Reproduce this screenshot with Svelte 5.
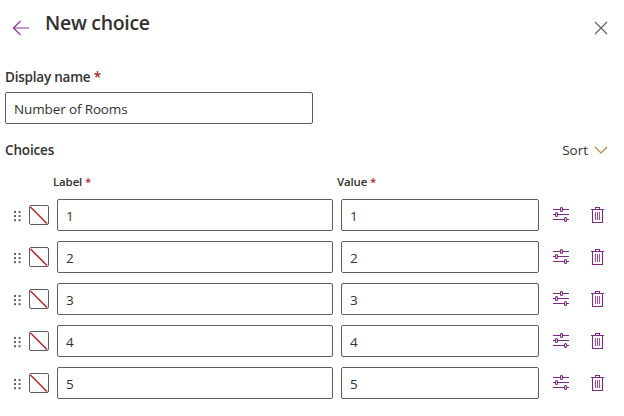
<script>
  let displayName = $state('Number of Rooms');
  let choices = $state([1, 2, 3, 4, 5].map((n) => ({ label: String(n), value: String(n) })));
  const dots = [0, 1, 2].flatMap((r) => [0, 1].map((c) => ({ x: c * 4.6, y: r * 4.1 })));
</script>

<main class="panel">
  <header class="header">
    <button class="back" aria-label="Back">
      <svg width="18" height="16" viewBox="0 0 18 16" fill="none" stroke="#8a3a91" stroke-width="1.2">
        <path d="M1.5 8H17M8.5 1L1.5 8l7 7" />
      </svg>
    </button>
    <h1>New choice</h1>
    <button class="close" aria-label="Close">
      <svg width="14" height="14" viewBox="0 0 14 14" fill="none" stroke="#5c5a60" stroke-width="1.1">
        <path d="M1 1l12 12M13 1L1 13" />
      </svg>
    </button>
  </header>

  <label class="field-label" for="display-name">Display name <span class="req">*</span></label>
  <input id="display-name" class="box name" bind:value={displayName} />

  <div class="section">
    <h2>Choices</h2>
    <button class="sort">
      <span>Sort</span>
      <svg width="14" height="8" viewBox="0 0 14 8" fill="none" stroke="#b37b39" stroke-width="1.1">
        <path d="M1 1l6 6 6-6" />
      </svg>
    </button>
  </div>

  <div class="columns">
    <span class="col-label">Label <span class="req">*</span></span>
    <span class="col-value">Value <span class="req">*</span></span>
  </div>

  <div class="rows">
    {#each choices as choice}
      <div class="row">
        <svg class="handle" width="7" height="11" viewBox="0 0 7 11" fill="#656066">
          {#each dots as d}
            <rect x={d.x} y={d.y} width="2" height="2" />
          {/each}
        </svg>
        <button class="swatch" aria-label="Color">
          <svg width="18" height="18" viewBox="0 0 18 18" stroke="#b5202a" stroke-width="1.5">
            <path d="M.5 1L17 17.5" />
          </svg>
        </button>
        <input class="box label" aria-label="Label" bind:value={choice.label} />
        <input class="box value" aria-label="Value" bind:value={choice.value} />
        <button class="settings" aria-label="Settings">
          <svg width="16" height="16" viewBox="0 0 16 16" fill="none" stroke="#7c2a84" stroke-width="1.1">
            <path d="M0 2.500h7.500M9.500 2.500H16M0 7.500h2.500M4.500 7.500H16M0 12.500h11.500M13.500 12.500H16" />
            <rect x="7.500" y="0.500" width="2" height="4" rx="1" />
            <rect x="2.500" y="5.500" width="2" height="4" rx="1" />
            <rect x="11.500" y="10.500" width="2" height="4" rx="1" />
          </svg>
        </button>
        <button class="delete" aria-label="Delete">
          <svg width="13" height="16" viewBox="0 0 13 16" fill="none" stroke="#7c2a84" stroke-width="1.1">
            <path d="M0 2.500h13M4.500 2.500v-2h4v2M1.500 2.500v13h10v-13" />
            <path d="M4.500 5v8M6.500 5v8M8.500 5v8" stroke-opacity=".8" />
          </svg>
        </button>
      </div>
    {/each}
  </div>
</main>

<style>
  :global(body) {
    background: #fff;
  }
  .panel {
    box-sizing: border-box;
    width: 624px;
    height: 416px;
    overflow: hidden;
    background: #fff;
    color: #323130;
    font-family: 'Open Sans', 'Noto Sans', sans-serif;
    font-size: 14px;
  }
  button {
    display: flex;
    padding: 0;
    border: 0;
    background: none;
    color: inherit;
    font: inherit;
  }
  svg {
    display: block;
  }
  h1,
  h2 {
    margin: 0;
    font-weight: 600;
  }
  .header {
    display: flex;
    align-items: flex-start;
    height: 67px;
    padding: 0 16px 0 12px;
    box-sizing: border-box;
  }
  .back {
    margin-top: 20px;
  }
  h1 {
    margin: 9px auto 0 15px;
    font-size: 19.500px;
    line-height: 28px;
    letter-spacing: -0.300px;
  }
  .close {
    margin-top: 21px;
  }
  .field-label {
    display: block;
    height: 25px;
    padding-left: 5px;
    font-size: 13.500px;
    font-weight: 600;
    line-height: 20px;
    letter-spacing: -0.220px;
  }
  .req {
    color: #a4262c;
  }
  .box {
    box-sizing: border-box;
    height: 32px;
    padding: 1px 8px 0;
    border: 1px solid #605e5c;
    border-radius: 2px;
    outline: 0;
    background: #fff;
    color: #323130;
    font: 13.500px 'Open Sans', 'Noto Sans', sans-serif;
    letter-spacing: -0.130px;
  }
  .name {
    display: block;
    width: 308px;
    margin-left: 5px;
  }
  .section {
    display: flex;
    align-items: center;
    justify-content: space-between;
    height: 20px;
    margin-top: 16px;
    padding: 0 16px 0 5px;
  }
  h2 {
    font-size: 13.500px;
    letter-spacing: -0.150px;
  }
  .sort {
    align-items: center;
    gap: 6px;
    font-size: 13.500px;
  }
  .columns {
    display: flex;
    height: 39px;
    padding: 14px 0 0 53px;
    box-sizing: border-box;
    font-size: 11.500px;
    font-weight: 600;
    line-height: 16px;
    letter-spacing: -0.150px;
  }
  .col-label {
    width: 284px;
  }
  .rows {
    display: flex;
    flex-direction: column;
    gap: 10px;
  }
  .row {
    display: flex;
    align-items: center;
    height: 32px;
    padding-left: 14px;
  }
  .handle {
    margin: 3px 8px 0 0;
  }
  .swatch {
    box-sizing: border-box;
    width: 20px;
    height: 20px;
    margin-right: 8px;
    border: 1px solid #605e5c;
    border-radius: 2px;
  }
  .label {
    width: 276px;
    margin-right: 8px;
  }
  .value {
    width: 198px;
    margin-right: 14px;
  }
  .settings {
    margin-right: 22px;
  }
</style>
